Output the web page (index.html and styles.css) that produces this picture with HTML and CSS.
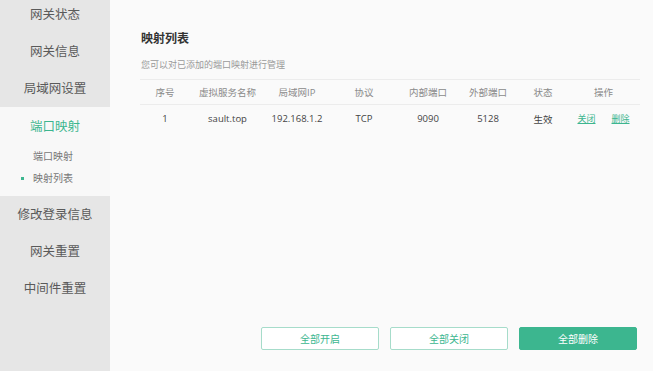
FILE: index.html
```html
<!DOCTYPE html>
<html lang="zh-CN">
<head>
    <meta charset="UTF-8">
    <title>映射列表</title>
    <link rel="stylesheet" href="styles.css">
</head>
<body>
    <div class="layout">
        <div class="sidebar">
            <div class="menu-item">网关状态</div>
            <div class="menu-item">网关信息</div>
            <div class="menu-item">局域网设置</div>
            <div class="menu-group">
                <div class="menu-title">端口映射</div>
                <div class="sub-item">端口映射</div>
                <div class="sub-item current">映射列表</div>
            </div>
            <div class="menu-item">修改登录信息</div>
            <div class="menu-item">网关重置</div>
            <div class="menu-item">中间件重置</div>
        </div>

        <div class="main">
            <h1 class="title">映射列表</h1>
            <p class="desc">您可以对已添加的端口映射进行管理</p>

            <table class="map-table">
                <thead>
                    <tr>
                        <th>序号</th>
                        <th>虚拟服务名称</th>
                        <th>局域网IP</th>
                        <th>协议</th>
                        <th>内部端口</th>
                        <th>外部端口</th>
                        <th>状态</th>
                        <th>操作</th>
                    </tr>
                </thead>
                <tbody>
                    <tr>
                        <td>1</td>
                        <td>sault.top</td>
                        <td>192.168.1.2</td>
                        <td>TCP</td>
                        <td>9090</td>
                        <td>5128</td>
                        <td>生效</td>
                        <td class="ops"><a href="#">关闭</a><a href="#">删除</a></td>
                    </tr>
                </tbody>
            </table>

            <div class="actions">
                <button class="btn">全部开启</button>
                <button class="btn">全部关闭</button>
                <button class="btn btn-primary">全部删除</button>
            </div>
        </div>
    </div>
</body>
</html>
```

FILE: styles.css
```css
:root {
    --green: #3cb68f;
    --text: #5a5a5a;
    --light-text: #8a8a8a;
    --line: #ececec;
}

* {
    margin: 0;
    padding: 0;
    box-sizing: border-box;
    font-family: "Open Sans", "Noto Sans CJK SC", sans-serif;
}

body {
    background: #fafafa;
    width: 653px;
    height: 371px;
    overflow: hidden;
}

.layout {
    display: flex;
    height: 371px;
}

/* 侧边菜单 */
.sidebar {
    width: 110px;
    flex-shrink: 0;
    background: #e6e6e6;
    margin-top: -4px;
    height: 375px;
}

.menu-item {
    height: 37px;
    line-height: 37px;
    text-align: center;
    font-size: 12.5px;
    color: var(--text);
}

.menu-group {
    background: #f8f8f8;
    height: 89px;
    padding-top: 9px;
}

.menu-title {
    text-align: center;
    font-size: 12.5px;
    color: var(--green);
    line-height: 22px;
    margin-bottom: 7px;
}

.sub-item {
    font-size: 10px;
    color: #777;
    line-height: 22px;
    padding-left: 33px;
    position: relative;
}

.sub-item.current::before {
    content: "";
    position: absolute;
    left: 21px;
    top: 10px;
    width: 3px;
    height: 3px;
    background: var(--green);
}

/* 内容区 */
.main {
    flex: 1;
    padding: 29px 13px 0 30px;
    display: flex;
    flex-direction: column;
}

.title {
    font-size: 12px;
    font-weight: bold;
    color: #333;
    line-height: 20px;
    margin-left: 1px;
}

.desc {
    font-size: 9px;
    color: #999;
    margin-top: 10px;
    line-height: 12px;
    margin-left: 1px;
}

.map-table {
    width: 500px;
    border-collapse: collapse;
    margin-top: 8px;
}

.map-table th,
.map-table td {
    text-align: center;
    font-size: 9.5px;
    font-weight: normal;
}

.map-table th {
    color: var(--light-text);
    height: 25px;
    border-top: 1px solid var(--line);
    border-bottom: 1px solid var(--line);
}

.map-table td {
    color: #444;
    height: 28px;
}

.map-table th:nth-child(1) { width: 50px; }
.map-table th:nth-child(2) { width: 75px; }
.map-table th:nth-child(3) { width: 64px; }
.map-table th:nth-child(4) { width: 70px; }
.map-table th:nth-child(5) { width: 58px; }
.map-table th:nth-child(6) { width: 62px; }
.map-table th:nth-child(7) { width: 48px; }

.ops a {
    color: var(--green);
    font-size: 9px;
    margin: 0 8px;
}

.actions {
    margin-top: auto;
    margin-bottom: 21px;
    display: flex;
    justify-content: flex-end;
    gap: 11px;
    padding-right: 3px;
}

.btn {
    width: 118px;
    height: 23px;
    border: 1px solid #a6dcca;
    border-radius: 2px;
    background: #fff;
    color: var(--green);
    font-size: 10px;
    cursor: pointer;
}

.btn-primary {
    background: var(--green);
    border-color: var(--green);
    color: #fff;
}
```
